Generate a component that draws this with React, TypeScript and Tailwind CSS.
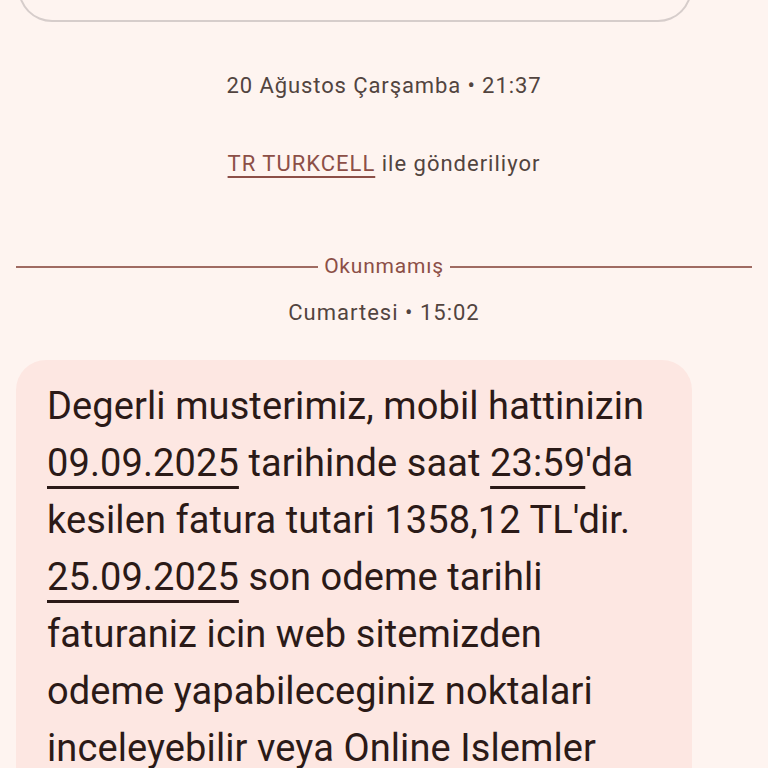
import React from 'react';

function Link({ children }: { children: React.ReactNode }) {
  return (
    <span className="underline decoration-[3px] underline-offset-[10px] decoration-[#2b1a17]">
      {children}
    </span>
  );
}

export default function App() {
  return (
    <div
      className="w-[768px] h-[768px] overflow-hidden bg-[#fef4f0] text-[#2b1a17]"
      style={{ fontFamily: 'Roboto, "Noto Sans", sans-serif' }}
    >
      {/* previous message card, cut off at the top */}
      <div className="ml-[18px] w-[674px] mt-[-80px] h-[102px] rounded-b-[34px] border-2 border-t-0 border-[#d6cdcb]" />

      <div className="mt-[49px] text-center text-[22px] leading-[30px] text-[#52443f] tracking-[0.9px]">
        20 Ağustos Çarşamba • 21:37
      </div>

      <div className="mt-[48px] text-center text-[22px] leading-[30px] text-[#52443f] tracking-[1px]">
        <span className="text-[#8c4f47] underline decoration-[1.5px] underline-offset-[5px]">TR TURKCELL</span> ile gönderiliyor
      </div>

      <div className="mt-[77px] mx-[16px] flex items-center">
        <div className="h-[2px] flex-1 bg-[#a06b62]" />
        <span className="px-[6px] text-[21px] leading-none tracking-[0.8px] text-[#8c4f47]">Okunmamış</span>
        <div className="h-[2px] flex-1 bg-[#a06b62]" />
      </div>

      <div className="mt-[21px] text-center text-[22px] leading-[30px] text-[#52443f] tracking-[1px]">
        Cumartesi • 15:02
      </div>

      <div className="mt-[32px] ml-[16px] w-[676px] rounded-[30px] bg-[#fde7e2] pl-[31px] pr-[10px] pt-[18px] pb-[30px]">
        <p className="text-[38px] leading-[57px] tracking-[0.1px] whitespace-nowrap">
          Degerli musterimiz, mobil hattinizin
          <br />
          <Link>09.09.2025</Link> tarihinde saat <Link>23:59</Link>'da
          <br />
          kesilen fatura tutari 1358,12 TL'dir.
          <br />
          <Link>25.09.2025</Link> son odeme tarihli
          <br />
          faturaniz icin web sitemizden
          <br />
          odeme yapabileceginiz noktalari
          <br />
          inceleyebilir veya Online Islemler
        </p>
      </div>
    </div>
  );
}
